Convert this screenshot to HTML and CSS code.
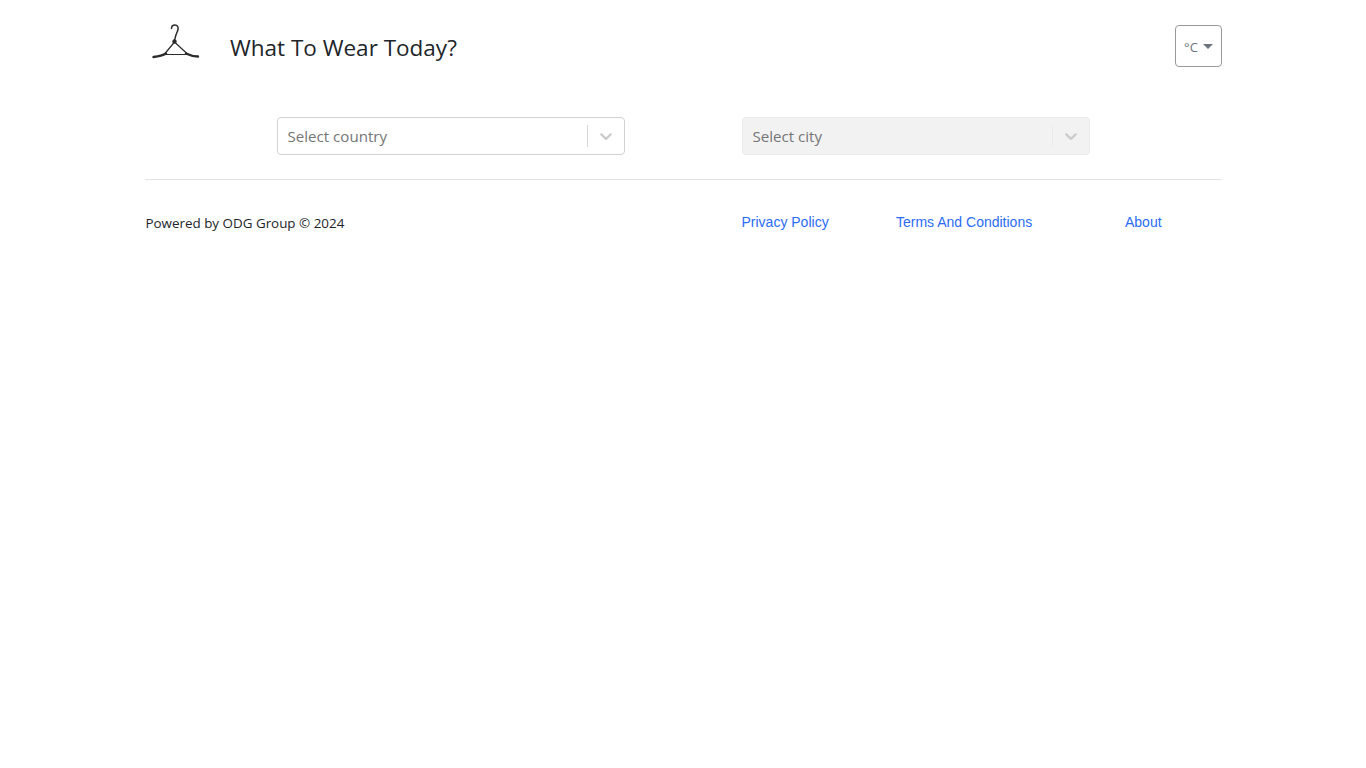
FILE: index.html
```html
<!DOCTYPE html>
<html lang="en">
<head>
<meta charset="utf-8">
<title>What To Wear Today?</title>
<link rel="stylesheet" href="styles.css">
</head>
<body>
<div class="page">
  <header class="header">
    <svg class="logo" width="48" height="36" viewBox="0 0 48 36" fill="none" stroke="#2b2b2b" stroke-linecap="round" stroke-linejoin="round">
      <path d="M19.5 4.5C19.5 2.5 21 1 23 1C25.5 1 26.5 3 26 5.5C25.5 8 24 10 23.5 12.5C23.3 14 22.8 15.5 22 17" stroke-width="1.5"/>
      <circle cx="22.5" cy="17.5" r="2.2" fill="#2b2b2b" stroke="none"/>
      <path d="M22.5 18L13 29.5M22.5 18L36 30.5M11 30.5H37" stroke-width="1.2"/>
      <path d="M1.5 33C6 32.5 10 32 14 29.5M34 29.5C38 31.5 42 32.5 46 32.5" stroke-width="2.4"/>
    </svg>
    <h1 class="title">What To Wear Today?</h1>
    <button class="unit" type="button">°C<span class="caret"></span></button>
  </header>
  <section class="selects">
    <div class="select">
      <span class="placeholder">Select country</span>
      <span class="sep"></span>
      <svg class="chev" width="20" height="20" viewBox="0 0 20 20"><path fill="currentColor" d="M4.516 7.548c0.436-0.446 1.043-0.481 1.576 0l3.908 3.747 3.908-3.747c0.533-0.481 1.141-0.446 1.574 0 0.436 0.445 0.408 1.197 0 1.615-0.406 0.418-4.695 4.502-4.695 4.502-0.217 0.223-0.502 0.335-0.787 0.335s-0.57-0.112-0.789-0.335c0 0-4.287-4.084-4.695-4.502s-0.436-1.17 0-1.615z"/></svg>
    </div>
    <div class="select disabled">
      <span class="placeholder">Select city</span>
      <span class="sep"></span>
      <svg class="chev" width="20" height="20" viewBox="0 0 20 20"><path fill="currentColor" d="M4.516 7.548c0.436-0.446 1.043-0.481 1.576 0l3.908 3.747 3.908-3.747c0.533-0.481 1.141-0.446 1.574 0 0.436 0.445 0.408 1.197 0 1.615-0.406 0.418-4.695 4.502-4.695 4.502-0.217 0.223-0.502 0.335-0.787 0.335s-0.57-0.112-0.789-0.335c0 0-4.287-4.084-4.695-4.502s-0.436-1.17 0-1.615z"/></svg>
    </div>
  </section>
  <hr class="rule">
  <footer class="footer">
    <p class="powered">Powered by ODG Group © 2024</p>
    <nav class="links">
      <a class="privacy" href="#">Privacy Policy</a>
      <a class="terms" href="#">Terms And Conditions</a>
      <a class="about" href="#">About</a>
    </nav>
  </footer>
</div>
</body>
</html>
```
FILE: styles.css
```css
* { box-sizing: border-box; }
html, body { margin: 0; background: #fff; }
body { font-family: "Open Sans", "Noto Sans", sans-serif; color: #212529; }
.page { width: 1076px; margin: 0 auto; }
.header { display: flex; align-items: flex-start; height: 117px; padding-left: 7px; padding-top: 24px; }
.logo { display: block; flex: none; }
.title { margin: 7px 0 0 30px; font-size: 22.5px; line-height: 34px; font-weight: 400; color: #212529; white-space: nowrap; }
.unit { margin: 1px -1px 0 auto; width: 47px; height: 42px; display: flex; align-items: center; justify-content: center; gap: 5px; padding: 2px 0 0; background: #fff; border: 1px solid #979a9d; border-radius: 4px; font-family: inherit; font-size: 13px; color: #6c757d; }
.caret { width: 0; height: 0; margin-bottom: 2px; border-left: 5px solid transparent; border-right: 5px solid transparent; border-top: 5px solid #6c757d; }
.selects { display: grid; grid-template-columns: 348px 348px; column-gap: 117px; padding-left: 132px; }
.select { height: 38px; display: flex; align-items: center; background: #fff; border: 1px solid #d2d2d2; border-radius: 4px; padding-left: 9.5px; }
.placeholder { flex: 1; font-size: 15.1px; line-height: 20px; color: #757575; white-space: nowrap; }
.sep { width: 1px; height: 22px; background: #d6d6d6; }
.chev { margin: 0 8px; color: #ccc; flex: none; }
.disabled { background: #f2f2f2; border-color: #ebebeb; }
.disabled .sep { background: #e9e9e9; }
.rule { margin: 24px 0 0; border: 0; border-top: 1px solid #e3e3e3; }
.footer { display: flex; align-items: flex-start; padding-top: 33px; }
.powered { margin: 0; width: 596.5px; padding-left: 0.5px; font-size: 13.4px; line-height: 20px; color: #212529; white-space: nowrap; }
.links { display: flex; font-family: "Liberation Sans", Arial, sans-serif; font-size: 14px; line-height: 18px; }
.links a { color: #2a6cf6; text-decoration: none; white-space: nowrap; }
.privacy { width: 154.5px; }
.terms { width: 229px; }
```
